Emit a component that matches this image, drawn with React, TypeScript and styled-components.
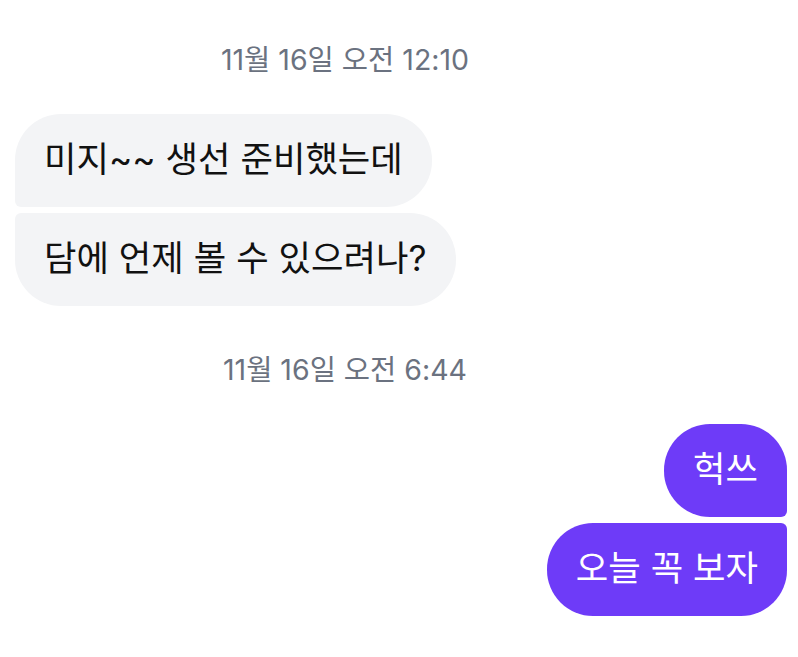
import React from "react";
import styled, { createGlobalStyle } from "styled-components";

const GlobalStyle = createGlobalStyle`
  html, body {
    margin: 0;
    padding: 0;
    background: #ffffff;
  }
  body {
    font-family: Inter, "Noto Sans CJK KR", "Noto Sans", sans-serif;
    -webkit-font-smoothing: antialiased;
  }
`;

const Thread = styled.div`
  display: flex;
  flex-direction: column;
  padding: 44px 11px 0 15px;
  width: 798px;
  box-sizing: border-box;
`;

const Stamp = styled.div`
  width: 660px;
  text-align: center;
  font-size: 28.5px;
  line-height: 32px;
  color: #6b7280;
  margin-bottom: 38px;
`;

const Group = styled.div<{ mine?: boolean }>`
  display: flex;
  flex-direction: column;
  align-items: ${({ mine }) => (mine ? "flex-end" : "flex-start")};
  gap: 6px;
  margin-bottom: 48px;

  &:last-child {
    margin-bottom: 0;
  }
`;

type Pos = "first" | "last";

const Bubble = styled.div<{ mine?: boolean; pos: Pos }>`
  box-sizing: border-box;
  height: 93px;
  display: flex;
  align-items: center;
  padding: 0 29px;
  font-size: 35.3px;
  line-height: 1.2;
  white-space: nowrap;
  background: ${({ mine }) => (mine ? "#6e3bf8" : "#f3f4f6")};
  color: ${({ mine }) => (mine ? "#ffffff" : "#111111")};
  border-radius: ${({ mine, pos }) => {
    const big = "46px";
    const small = "6px";
    if (mine) {
      return pos === "first"
        ? `${big} ${big} ${small} ${big}`
        : `${big} ${small} ${big} ${big}`;
    }
    return pos === "first"
      ? `${big} ${big} ${big} ${small}`
      : `${small} ${big} ${big} ${big}`;
  }};
`;

export default function App() {
  return (
    <>
      <GlobalStyle />
      <Thread>
        <Stamp>11월 16일 오전 12:10</Stamp>
        <Group>
          <Bubble pos="first">미지~~ 생선 준비했는데</Bubble>
          <Bubble pos="last">담에 언제 볼 수 있으려나?</Bubble>
        </Group>
        <Stamp>11월 16일 오전 6:44</Stamp>
        <Group mine>
          <Bubble mine pos="first">헉쓰</Bubble>
          <Bubble mine pos="last">오늘 꼭 보자</Bubble>
        </Group>
      </Thread>
    </>
  );
}
